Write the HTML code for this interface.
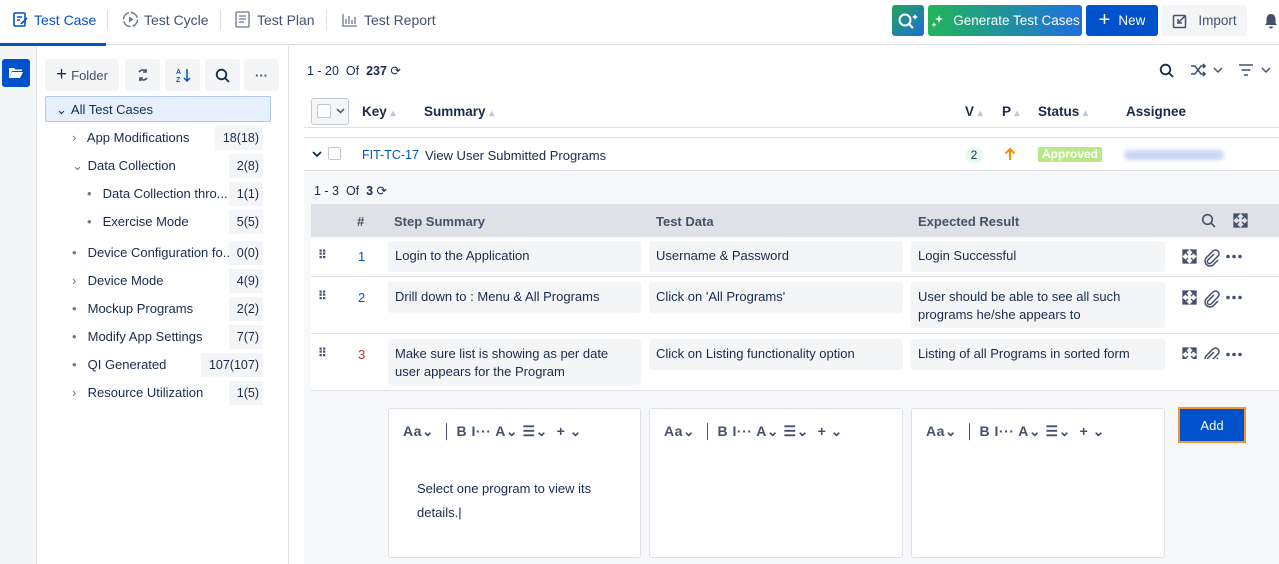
<!DOCTYPE html>
<html><head><meta charset="utf-8"><style>
*{box-sizing:border-box;margin:0;padding:0}
body{width:1279px;height:564px;overflow:hidden;background:#fff;font-family:"Liberation Sans",sans-serif;font-size:13px;color:#172b4d;position:relative}
.a{position:absolute}
.nav{left:0;top:0;width:1279px;height:45px;border-bottom:1px solid #dfe1e6}
.tab{top:12px;font-size:14px;color:#42526e}
.sep{top:10px;width:1px;height:20px;background:#dfe1e6}
.btn{top:5px;height:31px;border-radius:3px;color:#fff;font-size:13px;display:flex;align-items:center;justify-content:center}
.tb{top:59px;height:32px;background:#f4f5f7;border-radius:3px;display:flex;align-items:center;justify-content:center;color:#42526e;font-size:13px}
.tree{left:45px;width:226px;height:28px;font-size:13px;color:#172b4d;line-height:28px}
.cnt{position:absolute;right:8px;top:2px;height:24px;line-height:24px;background:#f4f5f7;padding:0 4px 0 8px;font-size:12.5px}
.cell{background:#f4f5f7;border-radius:3px;padding:6px 7px;line-height:18px;font-size:13px;color:#172b4d}
.ed{background:#fff;border:1px solid #dfe1e6;border-radius:3px;top:408px;height:150px}
.edt{position:absolute;top:14px;left:14px;font-size:14px;color:#42526e;font-weight:bold;white-space:pre;letter-spacing:0.5px}
.hd{font-weight:bold;color:#42526e;font-size:13px;top:214px}
.ic{color:#42526e;font-size:14px;font-weight:bold}
.chev{display:inline-block;width:12px;color:#6b778c}
</style></head><body>
<div class="a nav"></div>
<div class="a" style="left:0;top:43px;width:106px;height:3px;background:#0052cc"></div>
<svg class="a" style="left:12px;top:11px" width="17" height="17" viewBox="0 0 17 17"><rect x="2" y="2" width="11" height="13" rx="1" fill="none" stroke="#0052cc" stroke-width="1.6"/><path d="M5 6h5M5 9h3M9 13l6-6" stroke="#0052cc" stroke-width="1.6"/></svg>
<div class="a tab" style="left:34px;color:#0052cc">Test Case</div>
<div class="a sep" style="left:107px"></div>
<svg class="a" style="left:122px;top:11px" width="17" height="17"><circle cx="8.5" cy="8.5" r="7" fill="none" stroke="#6b778c" stroke-width="1.4" stroke-dasharray="9 2"/><path d="M7 5.5v6l4.5-3z" fill="#6b778c"/></svg>
<div class="a tab" style="left:144px">Test Cycle</div>
<div class="a sep" style="left:220px"></div>
<svg class="a" style="left:235px;top:11px" width="16" height="17"><rect x="1" y="1" width="13" height="15" rx="1" fill="none" stroke="#6b778c" stroke-width="1.3"/><path d="M4 5h7M4 8h7M4 11h5" stroke="#6b778c" stroke-width="1.2"/></svg>
<div class="a tab" style="left:257px">Test Plan</div>
<div class="a sep" style="left:326px"></div>
<svg class="a" style="left:342px;top:13px" width="16" height="14"><path d="M1 1v12h14M4 11V6M7 11V3M10 11V7M13 11V4" stroke="#6b778c" stroke-width="1.3" fill="none"/></svg>
<div class="a tab" style="left:364px">Test Report</div>

<div class="a btn" style="left:892px;width:32px;background:linear-gradient(135deg,#22a35a,#1e6fd9)"><svg width="24" height="20"><circle cx="9" cy="9" r="5.5" fill="none" stroke="#fff" stroke-width="2"/><path d="M13 13l4 4" stroke="#fff" stroke-width="2"/><path d="M19 3l1 2 2 1-2 1-1 2-1-2-2-1 2-1z" fill="#fff"/></svg></div>
<div class="a btn" style="left:928px;width:154px;background:linear-gradient(90deg,#22b55a,#1e6fe0);font-size:13.5px"><svg width="14" height="14" style="margin-right:9px"><path d="M9 1l1 3 3 1-3 1-1 3-1-3-3-1 3-1zM4 8l.7 2 2 .7-2 .7L4 13.5l-.7-2-2-.7 2-.7z" fill="#fff"/></svg>Generate Test Cases</div>
<div class="a btn" style="left:1086px;width:72px;background:#0052cc;font-size:13.5px"><span style="font-size:20px;margin-right:8px;font-weight:300">+</span>New</div>
<div class="a btn" style="left:1162px;width:85px;background:#f4f5f7;color:#42526e;font-size:13.5px"><svg width="16" height="16" style="margin-right:10px"><rect x="1.5" y="2.5" width="12" height="12" rx="1" fill="none" stroke="#42526e" stroke-width="1.5"/><path d="M6 10l7-7M6 6v4h4" stroke="#42526e" stroke-width="1.5" fill="none"/></svg>Import</div>
<svg class="a" style="left:1264px;top:13px" width="14" height="16"><path d="M7 1c-3 0-4.5 2.5-4.5 5v4L1 12h12l-1.5-2V6C11.5 3.5 10 1 7 1zM5 13.5a2 2 0 004 0z" fill="#42526e"/></svg>

<div class="a" style="left:0;top:46px;width:37px;height:518px;background:#f4f5f7;border-right:1px solid #dfe1e6"></div>
<div class="a" style="left:2px;top:59px;width:28px;height:28px;background:#0052cc;border-radius:3px"></div>
<svg class="a" style="left:8px;top:66px" width="16" height="13"><path d="M1 2h5l1.5 1.5H14V5H4L1 12z" fill="#fff"/><path d="M4 6h11l-3 6H1z" fill="#fff"/></svg>
<div class="a" style="left:288px;top:46px;width:1px;height:518px;background:#dfe1e6"></div>

<div class="a tb" style="left:45px;width:74px"><span style="font-size:19px;margin-right:4px;color:#172b4d">+</span>Folder</div>
<div class="a tb" style="left:125px;width:35px"><svg width="14" height="14"><path d="M3 4a5 5 0 017 -1M11 10a5 5 0 01-7 1" fill="none" stroke="#42526e" stroke-width="1.6"/><path d="M10 1v3H7M4 13v-3h3" fill="none" stroke="#42526e" stroke-width="1.6"/></svg></div>
<div class="a tb" style="left:165px;width:35px"><svg width="16" height="16"><text x="1" y="7" font-size="7" font-weight="bold" fill="#0052cc" font-family="Liberation Sans">A</text><text x="1" y="15" font-size="7" font-weight="bold" fill="#0052cc" font-family="Liberation Sans">Z</text><path d="M12 2v12M9 11l3 3 3-3" stroke="#0052cc" stroke-width="1.5" fill="none"/></svg></div>
<div class="a tb" style="left:205px;width:35px"><svg width="15" height="15"><circle cx="6.5" cy="6.5" r="4.8" fill="none" stroke="#172b4d" stroke-width="1.8"/><path d="M10 10l4 4" stroke="#172b4d" stroke-width="1.8"/></svg></div>
<div class="a tb" style="left:244px;width:35px;font-weight:bold">···</div>

<div class="a tree" style="top:96px;height:26px;line-height:26px;background:#e6effc;border:1px solid #b3c8ea;border-radius:2px;padding-left:10px"><span class="chev" style="color:#172b4d">⌄</span> All Test Cases</div>
<div class="a tree" style="top:124px;padding-left:27px"><span class="chev">›</span> App Modifications<span class="cnt">18(18)</span></div>
<div class="a tree" style="top:152px;padding-left:27px"><span class="chev">⌄</span> Data Collection<span class="cnt">2(8)</span></div>
<div class="a tree" style="top:180px;padding-left:42px"><span class="chev">•</span> Data Collection thro...<span class="cnt">1(1)</span></div>
<div class="a tree" style="top:208px;padding-left:42px"><span class="chev">•</span> Exercise Mode<span class="cnt">5(5)</span></div>
<div class="a tree" style="top:239px;padding-left:27px"><span class="chev">•</span> Device Configuration fo...<span class="cnt">0(0)</span></div>
<div class="a tree" style="top:267px;padding-left:27px"><span class="chev">›</span> Device Mode<span class="cnt">4(9)</span></div>
<div class="a tree" style="top:295px;padding-left:27px"><span class="chev">•</span> Mockup Programs<span class="cnt">2(2)</span></div>
<div class="a tree" style="top:323px;padding-left:27px"><span class="chev">•</span> Modify App Settings<span class="cnt">7(7)</span></div>
<div class="a tree" style="top:351px;padding-left:27px"><span class="chev">•</span> QI Generated<span class="cnt">107(107)</span></div>
<div class="a tree" style="top:379px;padding-left:27px"><span class="chev">›</span> Resource Utilization<span class="cnt">1(5)</span></div>

<div class="a" style="left:307px;top:63px;font-size:12.5px">1 - 20 &nbsp;Of &nbsp;<b>237</b> ⟳</div>
<svg class="a" style="left:1159px;top:63px" width="15" height="15"><circle cx="6.5" cy="6.5" r="4.8" fill="none" stroke="#172b4d" stroke-width="1.8"/><path d="M10 10l4 4" stroke="#172b4d" stroke-width="1.8"/></svg>
<svg class="a" style="left:1190px;top:63px" width="34" height="14"><path d="M1 3h4l6 8h4M1 11h4l6-8h4M13 1l2 2-2 2M13 9l2 2-2 2" fill="none" stroke="#42526e" stroke-width="1.6"/><path d="M24 5l4 4 4-4" fill="none" stroke="#42526e" stroke-width="1.5"/></svg>
<svg class="a" style="left:1238px;top:63px" width="36" height="14"><path d="M1 2h14M3.5 7h9M6 12h4" stroke="#42526e" stroke-width="1.6"/><path d="M24 5l4 4 4-4" fill="none" stroke="#42526e" stroke-width="1.5"/></svg>

<div class="a" style="left:311px;top:98px;width:38px;height:27px;border:1px solid #c1c7d0;border-radius:3px;background:#f4f5f7"></div>
<div class="a" style="left:317px;top:104px;width:14px;height:14px;border:1px solid #c1c7d0;border-radius:2px;background:#fff"></div>
<svg class="a" style="left:336px;top:108px" width="9" height="6"><path d="M1 1l3.5 3.5L8 1" fill="none" stroke="#42526e" stroke-width="1.5"/></svg>
<div class="a" style="left:362px;top:104px;font-weight:bold;font-size:13.5px">Key <span style="color:#c1c7d0;font-size:10px">▴</span></div>
<div class="a" style="left:424px;top:104px;font-weight:bold;font-size:13.5px">Summary <span style="color:#c1c7d0;font-size:10px">▴</span></div>
<div class="a" style="left:965px;top:104px;font-weight:bold;font-size:13.5px">V <span style="color:#c1c7d0;font-size:10px">▴</span></div>
<div class="a" style="left:1002px;top:104px;font-weight:bold;font-size:13.5px">P <span style="color:#c1c7d0;font-size:10px">▴</span></div>
<div class="a" style="left:1038px;top:104px;font-weight:bold;font-size:13.5px">Status <span style="color:#c1c7d0;font-size:10px">▴</span></div>
<div class="a" style="left:1126px;top:104px;font-weight:bold;font-size:13.5px">Assignee</div>
<div class="a" style="left:304px;top:127px;width:975px;height:1px;background:#dfe1e6"></div>
<div class="a" style="left:304px;top:137px;width:975px;height:1px;background:#dfe1e6"></div>

<svg class="a" style="left:312px;top:151px" width="10" height="7"><path d="M1 1l4 4 4-4" fill="none" stroke="#172b4d" stroke-width="1.8"/></svg>
<div class="a" style="left:328px;top:147px;width:13px;height:13px;border:1px solid #c1c7d0;border-radius:2px"></div>
<div class="a" style="left:362px;top:148px;color:#0052cc;font-size:12.5px">FIT-TC-17</div>
<div class="a" style="left:425px;top:148px;font-size:13px">View User Submitted Programs</div>
<div class="a" style="left:965px;top:147px;width:18px;height:16px;border-radius:8px;background:#e3fcef;font-size:12px;text-align:center;line-height:16px">2</div>
<svg class="a" style="left:1004px;top:147px" width="12" height="14"><path d="M6 13V2M1.5 6.5L6 2l4.5 4.5" fill="none" stroke="#ff8b00" stroke-width="2"/></svg>
<div class="a" style="left:1038px;top:147px;height:15px;padding:0 4px;color:#fff;font-size:12px;font-weight:bold;border-radius:2px;line-height:15px;background:#b8e986">Approved</div>
<div class="a" style="left:1124px;top:150px;width:100px;height:10px;border-radius:5px;background:#c7d6f5;filter:blur(2px)"></div>

<div class="a" style="left:304px;top:170px;width:975px;height:394px;background:#f7f8f9;border-top:1px solid #dfe1e6"></div>
<div class="a" style="left:314px;top:183px;font-size:12.5px">1 - 3 &nbsp;Of &nbsp;<b>3</b> ⟳</div>
<div class="a" style="left:311px;top:204px;width:968px;height:33px;background:#dfe1e6"></div>
<div class="a hd" style="left:357px">#</div>
<div class="a hd" style="left:394px">Step Summary</div>
<div class="a hd" style="left:656px">Test Data</div>
<div class="a hd" style="left:918px">Expected Result</div>
<svg class="a" style="left:1201px;top:213px" width="15" height="15"><circle cx="6.5" cy="6.5" r="4.8" fill="none" stroke="#42526e" stroke-width="1.6"/><path d="M10 10l4 4" stroke="#42526e" stroke-width="1.6"/></svg>
<svg class="a" style="left:1233px;top:213px" width="15" height="15" id="ex"><path d="M1 1h5L1 6zM14 1v5L9 1zM1 14V9l5 5zM14 14H9l5-5zM3 3l3 3M12 3l-3 3M3 12l3-3M12 12l-3-3" fill="#42526e" stroke="#42526e" stroke-width="1.3"/></svg>

<div class="a" style="left:311px;top:237px;width:968px;height:153px;background:#fff"></div>
<div class="a" style="left:311px;top:276px;width:968px;height:1px;background:#dfe1e6"></div>
<div class="a" style="left:311px;top:333px;width:968px;height:1px;background:#dfe1e6"></div>
<div class="a" style="left:311px;top:390px;width:968px;height:1px;background:#dfe1e6"></div>

<div class="a ic" style="left:318px;top:248px;font-size:12px">⠿</div>
<div class="a" style="left:358px;top:249px;color:#0052cc">1</div>
<div class="a cell" style="left:388px;top:241px;width:253px;height:31px">Login to the Application</div>
<div class="a cell" style="left:649px;top:241px;width:254px;height:31px">Username &amp; Password</div>
<div class="a cell" style="left:911px;top:241px;width:254px;height:31px">Login Successful</div>

<div class="a ic" style="left:318px;top:289px;font-size:12px">⠿</div>
<div class="a" style="left:358px;top:290px;color:#0052cc">2</div>
<div class="a cell" style="left:388px;top:282px;width:253px;height:31px">Drill down to : Menu &amp; All Programs</div>
<div class="a cell" style="left:649px;top:282px;width:254px;height:31px">Click on 'All Programs'</div>
<div class="a cell" style="left:911px;top:282px;width:254px;height:46px">User should be able to see all such programs he/she appears to</div>

<div class="a ic" style="left:318px;top:346px;font-size:12px">⠿</div>
<div class="a" style="left:358px;top:347px;color:#c9372c">3</div>
<div class="a cell" style="left:388px;top:339px;width:253px;height:46px">Make sure list is showing as per date user appears for the Program</div>
<div class="a cell" style="left:649px;top:339px;width:254px;height:31px">Click on Listing functionality option</div>
<div class="a cell" style="left:911px;top:339px;width:254px;height:31px">Listing of all Programs in sorted form</div>

<svg class="a" style="left:1182px;top:249px" width="70" height="110">
<defs><g id="row"><path d="M1 1h5L1 6zM14 1v5L9 1zM1 14V9l5 5zM14 14H9l5-5zM3 3l3 3M12 3l-3 3M3 12l3-3M12 12l-3-3" fill="#42526e" stroke="#42526e" stroke-width="1.3"/><path d="M32 5l-6 6a2 2 0 003 3l7-7a3.5 3.5 0 00-5-5l-7 7a5 5 0 007 7l5-5" fill="none" stroke="#42526e" stroke-width="1.5"/><circle cx="46" cy="7.5" r="1.8" fill="#42526e"/><circle cx="52" cy="7.5" r="1.8" fill="#42526e"/><circle cx="58" cy="7.5" r="1.8" fill="#42526e"/></g></defs>
<use href="#row"/><use href="#row" y="41"/><use href="#row" y="98"/></svg>

<div class="a ed" style="left:388px;width:253px"><div class="edt">Aa⌄  │ B I··· A⌄ ☰⌄  + ⌄</div>
<div class="a" style="left:28px;top:68px;font-size:13px;line-height:24px;width:200px">Select one program to view its details.|</div></div>
<div class="a ed" style="left:649px;width:254px"><div class="edt">Aa⌄  │ B I··· A⌄ ☰⌄  + ⌄</div></div>
<div class="a ed" style="left:911px;width:254px"><div class="edt">Aa⌄  │ B I··· A⌄ ☰⌄  + ⌄</div></div>
<div class="a" style="left:1178px;top:407px;width:68px;height:36px;border:2px solid #f79232;background:#0052cc;color:#fff;display:flex;align-items:center;justify-content:center;font-size:13px">Add</div>
</body></html>
